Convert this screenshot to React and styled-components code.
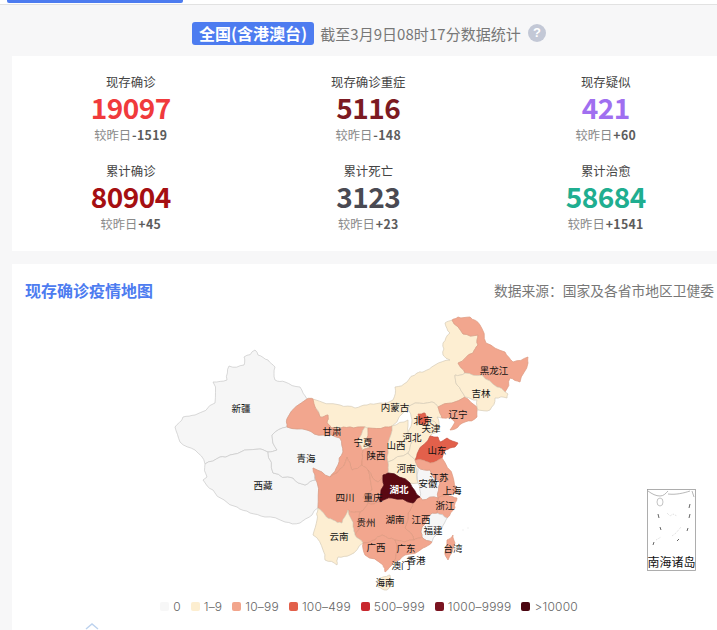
import React from "react";
import styled, { createGlobalStyle } from "styled-components";

const Global = createGlobalStyle`
  html, body { margin: 0; padding: 0; background: #f7f7f8; overflow: hidden; height: 630px; }
  body { font-family: "Noto Sans CJK SC", "Noto Sans", sans-serif; }
  #root { width: 717px; height: 630px; overflow: hidden; }
`;
const Page = styled.div`width: 726px; height: 630px; overflow: hidden;`;
const TopNav = styled.div`height: 4px; background: #fff; border-bottom: 1px solid #e2e2e2; padding-left: 7px;`;
const ActiveTab = styled.div`width: 176px; height: 3px; background: #4d7cf0; border-radius: 0 0 2px 2px;`;
const Head = styled.div`height: 51px; display: flex; align-items: center; justify-content: center; gap: 6px; padding: 5px 0 0 12px; width: 726px; box-sizing: border-box;`;
const Scope = styled.span`background: #4d7cf0; color: #fff; font-weight: 700; font-size: 16px; line-height: 23px; padding: 0 7px; border-radius: 3px; white-space: nowrap;`;
const AsOf = styled.span`color: #777; font-size: 15px; letter-spacing: .05px; white-space: nowrap;`;
const Help = styled.span`width: 18px; height: 18px; margin-left: 1px; border-radius: 50%; background: #c3c8d6; color: #fff; font: 700 13px/18px "Liberation Sans", sans-serif; text-align: center;`;
const StatsPanel = styled.section`margin-left: 12px; width: 714px; height: 195px; background: #fff; display: grid; grid-template-columns: repeat(3, 237.5px); grid-auto-rows: 89px; padding-top: 17px; box-sizing: border-box;`;
const Stat = styled.div`display: flex; flex-direction: column; align-items: center;`;
const StatLabel = styled.div`font-size: 12.4px; line-height: 18px; color: #444;`;
const StatNum = styled.div`font-size: 28px; line-height: 34px; margin-top: -1px; font-weight: 700; color: ${p => p.$c}; letter-spacing: -0.5px;`;
const StatDiff = styled.div`font-size: 12.3px; line-height: 18px; margin-top: 2px; color: #8a8a8a; b { color: #5c5c5c; font-weight: 700; margin-left: 1px; letter-spacing: .35px; }`;
const MapPanel = styled.section`margin: 13px 0 0 12px; width: 714px; height: 366px; background: #fff; box-sizing: border-box; padding: 0 12px 0 13px;`;
const MapHead = styled.div`height: 52px; display: flex; align-items: center; justify-content: space-between;`;
const MapTitle = styled.h2`margin: 0; color: #4d7cf0; font-size: 16px; font-weight: 700;`;
const Source = styled.span`color: #777; font-size: 13.75px; white-space: nowrap;`;
const MapSvg = styled.svg`display: block; margin-left: -13px; width: 714px; height: 278px;`;
const Prov = styled.path`fill: ${p => p.$f}; stroke: ${p => p.$s}; stroke-width: .7; stroke-linejoin: round;`;
const Lbl = styled.text`font-family: "Noto Sans CJK SC", sans-serif; font-size: 9.5px; text-anchor: middle; fill: ${p => p.$light ? "#fff" : "#111"}; font-weight: ${p => p.$light ? 700 : 400};`;
const InsetLabel = styled.text`font-family: "Noto Sans CJK SC", sans-serif; font-size: 12px; fill: #111; text-anchor: middle;`;
const Legend = styled.div`display: flex; justify-content: center; align-items: center; height: 20px; margin-top: 2px; gap: 10px; margin-left: -13px; width: 714px;`;
const LegendItem = styled.div`display: flex; align-items: center; gap: 4px; font: 300 12px "Inter", sans-serif; color: #666; letter-spacing: .2px;`;
const Swatch = styled.i`display: block; width: 9px; height: 9px; border-radius: 2px; background: ${p => p.$c};`;
const Up = styled.svg`display: block; margin: 6px 0 0 60px; width: 14px; height: 8px;`;

const C = { none: "#f6f6f6", a: "#fdeed2", b: "#f2a68e", c: "#e2604b", e: "#5a0812" };
const lineLight = "#d6cbb8", lineGrey = "#c9c9c9", lineSalmon = "#dc9a80";

const provinces = [
  ["none", "255,350 244,357 244,365 229,366 227,380 213,382 215,403 195,415 183,417 175,427 180,442 195,450 205,464 220,457 230,455 260,449 268,452 277,450 272,435 287,427 288,417 307,399 300,387 285,382 275,380 275,367 268,360 258,355", lineGrey],
  ["none", "205,464 207,477 203,480 213,490 237,507 250,513 265,517 285,522 300,523 312,515 318,508 317,482 315,480 305,485 293,478 273,473 268,452 260,449 230,455 220,457", lineGrey],
  ["none", "272,435 287,427 307,430 323,435 340,438 343,452 338,465 330,477 313,468 315,480 305,485 293,478 273,473 268,452 277,450", lineGrey],
  ["a", "307,399 313,399 340,405 355,408 367,405 380,403 393,400 395,387 407,382 417,373 423,372 435,365 450,360 443,355 443,343 450,333 445,323 452,320 463,334 478,335 478,345 473,353 458,363 465,373 455,375 457,385 465,397 438,407 432,402 415,403 408,408 392,426 385,427 368,428 365,427 350,427 337,430 327,423 328,415 320,417", lineLight],
  ["b", "307,399 313,399 320,417 328,415 327,423 337,430 350,427 365,427 358,442 363,450 362,465 352,470 347,457 337,473 330,477 338,465 343,452 340,438 323,435 307,430 287,427 288,417", lineSalmon],
  ["a", "365,427 368,428 367,438 370,448 363,450 358,442", lineLight],
  ["b", "368,428 385,427 392,426 388,443 388,462 388,473 383,475 378,482 368,470 362,465 363,450 370,448 367,438", lineSalmon],
  ["b", "313,468 330,477 337,473 347,457 352,470 362,465 368,470 372,490 363,497 368,503 360,512 348,510 342,523 333,520 325,515 318,508 317,482", lineSalmon],
  ["b", "368,470 378,482 383,475 384,485 381,490 380,502 368,503 363,497 372,490", lineSalmon],
  ["a", "392,426 408,420 408,432 412,442 408,453 388,462 388,443", lineLight],
  ["a", "408,408 415,403 432,402 438,407 442,418 437,417 440,428 430,436 418,452 415,460 408,453 412,442 408,432 412,420", lineLight],
  ["c", "418,414 425,413 429,420 425,425 418,423", "#c9604e"],
  ["a", "429,420 436,423 434,431 427,430", lineLight],
  ["b", "438,407 465,397 477,407 477,417 465,422 455,429 450,430 455,422 450,417 442,418", lineSalmon],
  ["b", "452,320 458,317 470,317 480,325 486,343 505,352 513,362 528,357 528,363 520,382 510,378 505,392 497,387 482,375 465,373 458,363 473,353 478,345 478,335 463,334", lineSalmon],
  ["a", "455,375 465,373 482,375 497,387 505,392 508,394 507,398 495,398 490,410 478,410 477,400 465,397 457,385", lineLight],
  ["c", "418,452 430,436 438,437 440,442 447,438 458,443 455,447 445,450 442,458 430,463 422,460 415,460", "#c9503f"],
  ["a", "388,462 408,453 415,460 418,467 415,465 418,483 410,483 388,473", lineLight],
  ["none", "418,467 430,470 440,483 438,498 422,500 420,497 418,483", lineGrey],
  ["b", "415,460 422,460 430,463 442,458 453,477 457,492 447,495 438,498 440,483 430,470 418,467", lineSalmon],
  ["b", "437,502 438,498 447,495 457,498 455,508 447,518 437,513", lineSalmon],
  ["none", "432,513 437,513 447,518 442,528 432,542 422,537 422,527", lineGrey],
  ["b", "413,503 420,497 422,500 438,498 437,502 437,513 432,513 422,527 422,537 414,540 405,528 408,513", lineSalmon],
  ["b", "368,503 380,502 392,498 413,503 408,513 405,528 414,540 395,540 382,535 375,540 363,543 355,535 360,527 360,512", lineSalmon],
  ["b", "348,510 360,512 360,527 355,535 353,527", lineSalmon],
  ["e", "383,475 388,473 410,483 420,497 413,503 392,498 380,502 381,490 384,485", "#4a0510"],
  ["a", "318,508 325,515 333,520 342,523 348,510 353,527 355,535 363,543 350,555 338,557 337,565 325,560 323,550 313,535 317,520", lineLight],
  ["b", "363,543 375,540 382,535 395,540 397,545 393,563 385,572 383,565 365,555", lineSalmon],
  ["b", "397,545 395,540 414,540 422,537 432,542 423,548 405,555 393,563", lineSalmon],
  ["a", "383,577 390,575 392,582 387,590 378,587 377,580", lineLight],
  ["b", "453,535 455,543 448,560 445,552 447,540", lineSalmon],
];

// Wobble each border a little; keyed on the edge's two ends so that neighbours share the same line.
function noise(a, b) {
  const s = Math.sin(a * 12.9898 + b * 78.233) * 43758.5453;
  return (s - Math.floor(s)) * 2 - 1;
}
function wobble(p, q, depth) {
  if (depth === 0) return [];
  const [a, b] = p[0] < q[0] || (p[0] === q[0] && p[1] < q[1]) ? [p, q] : [q, p];
  const dx = b[0] - a[0], dy = b[1] - a[1], len = Math.hypot(dx, dy);
  if (len < 3) return [];
  const amt = noise(a[0] + b[0] * 1.7, a[1] + b[1] * 1.3) * Math.min(len * 0.12, 2.2);
  const m = [(p[0] + q[0]) / 2 - (dy / len) * amt, (p[1] + q[1]) / 2 + (dx / len) * amt];
  return [...wobble(p, m, depth - 1), m, ...wobble(m, q, depth - 1)];
}
function toPath(str) {
  const pts = str.split(" ").map(s => s.split(",").map(Number));
  const out = [];
  pts.forEach((p, i) => {
    out.push(p, ...wobble(p, pts[(i + 1) % pts.length], 2));
  });
  return "M" + out.map(p => p[0].toFixed(1) + " " + p[1].toFixed(1)).join("L") + "Z";
}

const labels = [
  ["新疆", 241, 412], ["西藏", 263, 489], ["青海", 306, 462], ["甘肃", 332, 435], ["宁夏", 363, 446],
  ["陕西", 376, 459], ["山西", 396, 449], ["河北", 412, 441], ["内蒙古", 395, 411], ["北京", 423, 424],
  ["天津", 431, 432], ["辽宁", 458, 418], ["吉林", 481, 397], ["黑龙江", 494, 374], ["山东", 437, 454],
  ["河南", 406, 472], ["江苏", 439, 481], ["安徽", 428, 487], ["上海", 452, 494], ["浙江", 445, 509],
  ["湖北", 399, 493, true], ["四川", 345, 501], ["重庆", 373, 501], ["湖南", 395, 523], ["江西", 421, 523],
  ["贵州", 366, 526], ["福建", 433, 534], ["云南", 339, 540], ["广西", 376, 551], ["广东", 406, 552],
  ["香港", 416, 564], ["澳门", 401, 569], ["台湾", 453, 552], ["海南", 385, 586],
];

const legend = [
  ["0", "#f7f7f7"], ["1–9", "#fdeed0"], ["10–99", "#f2a58c"], ["100–499", "#e2604b"],
  ["500–999", "#c8282e"], ["1000–9999", "#7a1420"], [">10000", "#4a0510"],
];

const stats = [
  ["现存确诊", "19097", "#f03a3c", "-1519"], ["现存确诊重症", "5116", "#7c1a22", "-148"], ["现存疑似", "421", "#a06ff0", "+60"],
  ["累计确诊", "80904", "#a50f12", "+45"], ["累计死亡", "3123", "#4a4a52", "+23"], ["累计治愈", "58684", "#1fae90", "+1541"],
];

export default function App() {
  return (
    <Page>
      <Global />
      <TopNav><ActiveTab /></TopNav>
      <Head>
        <Scope>全国(含港澳台)</Scope>
        <AsOf>截至3月9日08时17分数据统计</AsOf>
        <Help>?</Help>
      </Head>
      <StatsPanel>
        {stats.map(s => (
          <Stat key={s[0]}>
            <StatLabel>{s[0]}</StatLabel>
            <StatNum $c={s[2]}>{s[1]}</StatNum>
            <StatDiff>较昨日<b>{s[3]}</b></StatDiff>
          </Stat>
        ))}
      </StatsPanel>
      <MapPanel>
        <MapHead>
          <MapTitle>现存确诊疫情地图</MapTitle>
          <Source>数据来源：国家及各省市地区卫健委</Source>
        </MapHead>
        <MapSvg viewBox="12 316 714 278">
          {provinces.map((p, i) => <Prov key={i} $f={C[p[0]]} $s={p[2]} d={toPath(p[1])} />)}
          <circle cx="463" cy="530" r=".8" fill="#eee" />
          <circle cx="468" cy="528" r=".8" fill="#eee" />
          {labels.map(l => <Lbl key={l[0]} x={l[1]} y={l[2]} $light={l[3]}>{l[0]}</Lbl>)}
          <rect x="647.5" y="489.5" width="48" height="81" fill="#fff" stroke="#999" strokeWidth=".8" />
          <path d="M648 491c4 3 8 5 12 5s6-3 8-5M668 494c8 1 16-1 22-3M692 491l2 6" fill="none" stroke="#999" strokeWidth=".7" />
          <ellipse cx="660" cy="502" rx="3" ry="4" fill="none" stroke="#aaa" strokeWidth=".7" />
          <path d="M658 514l1 4M690 504l-1 4M690 514l-1 4M660 527l1 3M688 528l-1 3M677 541l2-2M654 542l-1 3" stroke="#666" strokeWidth="1" />
          <path d="M667 513l3 3 3-2 4 2M672 536l4-3 5-6M656 540l5-3" fill="none" stroke="#ccc" strokeWidth=".7" strokeDasharray="1 1" />
          <InsetLabel x="671.5" y="567">南海诸岛</InsetLabel>
        </MapSvg>
        <Legend>
          {legend.map(l => (
            <LegendItem key={l[0]}><Swatch $c={l[1]} />{l[0]}</LegendItem>
          ))}
        </Legend>
        <Up viewBox="0 0 14 8"><path d="M1 7l6-5 6 5" fill="none" stroke="#bcd2ee" strokeWidth="1.4" /></Up>
      </MapPanel>
    </Page>
  );
}
